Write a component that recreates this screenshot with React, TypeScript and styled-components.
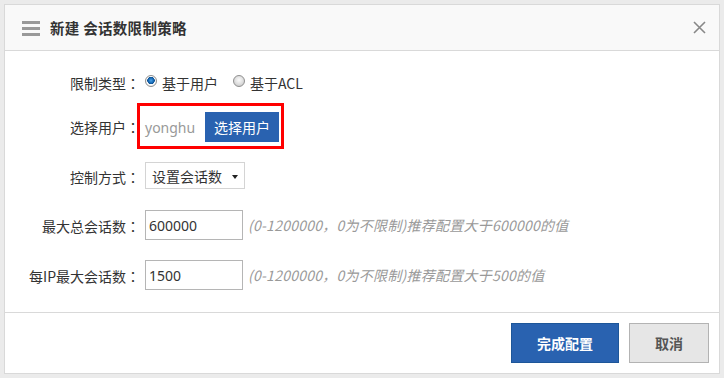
import React from "react";
import styled, { createGlobalStyle } from "styled-components";

const Global = createGlobalStyle`
  html, body { margin: 0; padding: 0; background: #ebebeb; }
  body { font-family: "Noto Sans CJK SC", "Noto Sans", sans-serif; color: #333; }
  * { box-sizing: border-box; }
`;

const Page = styled.div`
  width: 724px;
  height: 378px;
  padding: 4px 5px 5px 4px;
  background: #ebebeb;
`;

const Dialog = styled.div`
  width: 716px;
  height: 370px;
  border: 1px solid #d9d9d9;
  background: #fff;
  display: flex;
  flex-direction: column;
`;

const Header = styled.div`
  height: 46px;
  flex: none;
  background: #f9f9f9;
  border-bottom: 1px solid #d9d9d9;
  display: flex;
  align-items: center;
  padding: 0 13px 0 17px;
`;

const Burger = styled.div`
  width: 18px;
  display: flex;
  flex-direction: column;
  gap: 3px;
  margin-top: 2px;
  span { display: block; height: 3px; background: #999; }
`;

const Title = styled.div`
  margin-left: 10px;
  font-size: 14.5px;
  font-weight: bold;
  color: #333;
  line-height: 20px;
  letter-spacing: 0.3px;
  flex: 1;
`;

const Close = styled.svg`
  width: 13px;
  height: 13px;
  display: block;
`;

const Body = styled.div`
  flex: 1;
  padding-top: 21px;
  display: flex;
  flex-direction: column;
`;

const Row = styled.div<{ $mt?: number; $h: number }>`
  display: flex;
  align-items: center;
  height: ${(p) => p.$h}px;
  margin-top: ${(p) => p.$mt ?? 0}px;
`;

const Label = styled.div`
  width: 135px;
  text-align: right;
  font-size: 14px;
  line-height: 20px;
  color: #333;
  flex: none;
  margin-right: 5px;
  padding-top: 2px;
`;

const Colon = styled.span`
  font-family: "Noto Sans CJK JP", "Noto Sans CJK SC", sans-serif;
`;

const RadioGroup = styled.div`
  display: flex;
  align-items: center;
  font-size: 14px;
  line-height: 20px;
  padding-top: 2px;
`;

const RadioItem = styled.label`
  display: flex;
  align-items: center;
  gap: 5px;
  margin-right: 15px;
`;

const RadioDot = styled.span<{ $on?: boolean }>`
  width: 12px;
  height: 12px;
  border-radius: 50%;
  border: 1px solid #8f8f8f;
  background: ${(p) =>
    p.$on
      ? "radial-gradient(circle at 50% 45%, #4aa3e8 0, #1769b5 2.5px, #0d4f8f 3.5px, #fff 4px, #e8e8e8 6px)"
      : "radial-gradient(circle at 50% 40%, #fafafa 0, #e6e6e6 3px, #cfcfcf 6px)"};
  margin-top: -4px;
`;

const Highlight = styled.div`
  margin-left: -8px;
  border: 3px solid #f00;
  height: 46px;
  width: 147px;
  display: flex;
  align-items: center;
  padding: 2px 2px 0 5px;
`;

const Placeholder = styled.span`
  font-family: "Noto Sans", "Noto Sans CJK SC", sans-serif;
  font-size: 14px;
  color: #999;
  width: 60px;
  flex: none;
`;

const SmallBlue = styled.button`
  width: 75px;
  height: 30px;
  border: none;
  background: #2962b0;
  color: #fff;
  font-family: inherit;
  font-size: 14px;
  padding: 0;
`;

const Select = styled.div`
  width: 100px;
  height: 27px;
  border: 1px solid #d4d4d4;
  background: #fff;
  display: flex;
  align-items: center;
  justify-content: space-between;
  padding: 0 6px 0 6px;
  font-size: 14px;
`;

const Caret = styled.span`
  width: 0;
  height: 0;
  border-left: 3.5px solid transparent;
  border-right: 3.5px solid transparent;
  border-top: 4px solid #222;
  margin-top: 2px;
`;

const Input = styled.div`
  width: 98px;
  height: 30px;
  border: 1px solid #b5b5b5;
  display: flex;
  align-items: center;
  padding-left: 3px;
  font-family: "Noto Sans", "Noto Sans CJK SC", sans-serif;
  font-size: 14px;
  color: #333;
`;

const Hint = styled.span`
  margin-left: 5px;
  font-size: 14px;
  font-style: italic;
  letter-spacing: 0.25px;
  color: #999;
`;

const Footer = styled.div`
  height: 61px;
  flex: none;
  border-top: 1px solid #d9d9d9;
  display: flex;
  align-items: center;
  justify-content: flex-end;
  gap: 10px;
  padding-right: 10px;
`;

const FooterButton = styled.button<{ $primary?: boolean }>`
  height: 40px;
  width: ${(p) => (p.$primary ? 108 : 80)}px;
  border: 1px solid ${(p) => (p.$primary ? "#1d5699" : "#b3b3b3")};
  background: ${(p) => (p.$primary ? "#2962b0" : "#e6e6e6")};
  color: ${(p) => (p.$primary ? "#fff" : "#555")};
  font-family: inherit;
  font-size: 14px;
  font-weight: bold;
  padding: 0;
`;

export default function App() {
  return (
    <>
      <Global />
      <Page>
        <Dialog>
          <Header>
            <Burger>
              <span />
              <span />
              <span />
            </Burger>
            <Title>新建 会话数限制策略</Title>
            <Close viewBox="0 0 13 13">
              <path d="M1 1 L12 12 M12 1 L1 12" stroke="#888" strokeWidth="1.6" fill="none" />
            </Close>
          </Header>
          <Body>
            <Row $h={20}>
              <Label>限制类型<Colon>：</Colon></Label>
              <RadioGroup>
                <RadioItem>
                  <RadioDot $on />
                  基于用户
                </RadioItem>
                <RadioItem>
                  <RadioDot />
                  基于ACL
                </RadioItem>
              </RadioGroup>
            </Row>
            <Row $h={46} $mt={11}>
              <Label>选择用户<Colon>：</Colon></Label>
              <Highlight>
                <Placeholder>yonghu</Placeholder>
                <SmallBlue>选择用户</SmallBlue>
              </Highlight>
            </Row>
            <Row $h={27} $mt={13}>
              <Label>控制方式<Colon>：</Colon></Label>
              <Select>
                设置会话数
                <Caret />
              </Select>
            </Row>
            <Row $h={30} $mt={21}>
              <Label>最大总会话数<Colon>：</Colon></Label>
              <Input>600000</Input>
              <Hint>(0-1200000，0为不限制)推荐配置大于600000的值</Hint>
            </Row>
            <Row $h={30} $mt={20}>
              <Label>每IP最大会话数<Colon>：</Colon></Label>
              <Input>1500</Input>
              <Hint>(0-1200000，0为不限制)推荐配置大于500的值</Hint>
            </Row>
          </Body>
          <Footer>
            <FooterButton $primary>完成配置</FooterButton>
            <FooterButton>取消</FooterButton>
          </Footer>
        </Dialog>
      </Page>
    </>
  );
}
